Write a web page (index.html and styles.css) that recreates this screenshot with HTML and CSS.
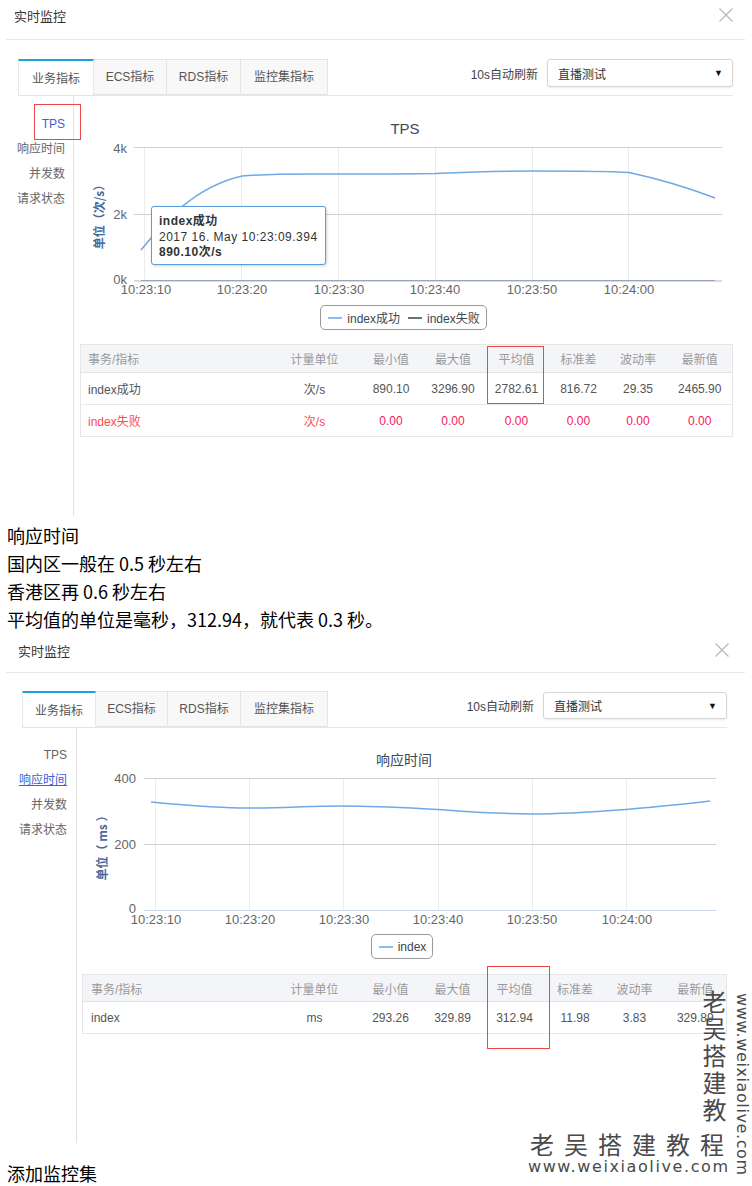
FILE: index.html
```html
<!DOCTYPE html>
<html lang="zh-CN">
<head>
<meta charset="utf-8">
<title>实时监控</title>
<link rel="stylesheet" href="styles.css">
</head>
<body>
<div class="page">

  <section class="panel panel-a">
    <header class="panel-head">
      <span class="panel-title">实时监控</span>
      <svg class="close" width="14" height="14" viewBox="0 0 14 14"><path d="M0.5 0.5 L13.5 13.5 M13.5 0.5 L0.5 13.5"/></svg>
    </header>
    <div class="toolbar">
      <ul class="tabs">
        <li class="tab active">业务指标</li>
        <li class="tab">ECS指标</li>
        <li class="tab">RDS指标</li>
        <li class="tab">监控集指标</li>
      </ul>
      <div class="refresh">
        <span class="refresh-label">10s自动刷新</span>
        <div class="select"><span>直播测试</span><span class="caret">▼</span></div>
      </div>
    </div>
    <div class="body">
      <nav class="side">
        <a class="side-item current">TPS</a>
        <a class="side-item">响应时间</a>
        <a class="side-item">并发数</a>
        <a class="side-item">请求状态</a>
      </nav>
      <div class="main">
        <div class="chart">
          <svg class="plot" width="658" height="209" viewBox="75 96 658 209">
            <text class="ctitle" x="406" y="134">TPS</text>
            <g class="vgrid">
              <line x1="145.5" y1="147" x2="145.5" y2="281"/>
              <line x1="242.5" y1="147" x2="242.5" y2="281"/>
              <line x1="339.5" y1="147" x2="339.5" y2="281"/>
              <line x1="436.5" y1="147" x2="436.5" y2="281"/>
              <line x1="533.5" y1="147" x2="533.5" y2="281"/>
              <line x1="629.5" y1="147" x2="629.5" y2="281"/>
            </g>
            <g class="hgrid">
              <line x1="135" y1="147.5" x2="723" y2="147.5"/>
              <line x1="135" y1="214.5" x2="723" y2="214.5"/>
            </g>
            <line class="axis" x1="135" y1="281" x2="723" y2="281"/>
            <path class="series2" d="M142 280.5 L716 280.5"/>
            <path class="series" d="M142 250 C165 222 195 187 243 176 C280 173 310 174 340 174 C380 174 400 174 436 173.5 C470 172 500 171 533 171 C570 171 605 171 630 172.5 C665 180 690 188 716 198"/>
            <text class="ylab" x="128" y="152.5">4k</text>
            <text class="ylab" x="128" y="219">2k</text>
            <text class="ylab" x="128" y="284">0k</text>
            <text class="xlab" x="147" y="294">10:23:10</text>
            <text class="xlab" x="243" y="294">10:23:20</text>
            <text class="xlab" x="340" y="294">10:23:30</text>
            <text class="xlab" x="436" y="294">10:23:40</text>
            <text class="xlab" x="533" y="294">10:23:50</text>
            <text class="xlab" x="630" y="294">10:24:00</text>
            <text class="ytitle" transform="translate(105 214) rotate(-90)">单位（次/s）</text>
          </svg>
          <div class="tooltip">
            <div class="tip-name">index成功</div>
            <div class="tip-time">2017 16. May 10:23:09.394</div>
            <div class="tip-value">890.10次/s</div>
          </div>
        </div>
        <div class="legend-row">
          <div class="legend">
            <span class="legend-item"><i class="swatch blue"></i>index成功</span>
            <span class="legend-item"><i class="swatch gray"></i>index失败</span>
          </div>
        </div>
        <table class="stats">
          <colgroup>
            <col class="ca1"><col class="ca2"><col class="ca3"><col class="ca4"><col class="ca5"><col class="ca6"><col class="ca7"><col class="ca8">
          </colgroup>
          <thead>
            <tr><th class="name">事务/指标</th><th>计量单位</th><th>最小值</th><th>最大值</th><th>平均值</th><th>标准差</th><th>波动率</th><th>最新值</th></tr>
          </thead>
          <tbody>
            <tr><td class="name">index成功</td><td>次/s</td><td>890.10</td><td>3296.90</td><td>2782.61</td><td>816.72</td><td>29.35</td><td>2465.90</td></tr>
            <tr class="fail"><td class="name">index失败</td><td>次/s</td><td class="num">0.00</td><td class="num">0.00</td><td class="num">0.00</td><td class="num">0.00</td><td class="num">0.00</td><td class="num">0.00</td></tr>
          </tbody>
        </table>
      </div>
    </div>
    <span class="mark mark-tps"></span>
    <span class="mark mark-avg-a"></span>
  </section>

  <div class="article">
    <p>响应时间</p>
    <p>国内区一般在 0.5 秒左右</p>
    <p>香港区再 0.6 秒左右</p>
    <p>平均值的单位是毫秒，312.94，就代表 0.3 秒。</p>
  </div>

  <section class="panel panel-b">
    <header class="panel-head">
      <span class="panel-title">实时监控</span>
      <svg class="close" width="14" height="14" viewBox="0 0 14 14"><path d="M0.5 0.5 L13.5 13.5 M13.5 0.5 L0.5 13.5"/></svg>
    </header>
    <div class="toolbar">
      <ul class="tabs">
        <li class="tab active">业务指标</li>
        <li class="tab">ECS指标</li>
        <li class="tab">RDS指标</li>
        <li class="tab">监控集指标</li>
      </ul>
      <div class="refresh">
        <span class="refresh-label">10s自动刷新</span>
        <div class="select"><span>直播测试</span><span class="caret">▼</span></div>
      </div>
    </div>
    <div class="body">
      <nav class="side">
        <a class="side-item">TPS</a>
        <a class="side-item current link">响应时间</a>
        <a class="side-item">并发数</a>
        <a class="side-item">请求状态</a>
      </nav>
      <div class="main">
        <div class="chart">
          <svg class="plot" width="649" height="206" viewBox="78 728 649 206">
            <text class="ctitle cjk" x="405" y="765">响应时间</text>
            <g class="vgrid">
              <line x1="156.5" y1="778" x2="156.5" y2="910"/>
              <line x1="250.5" y1="778" x2="250.5" y2="910"/>
              <line x1="344.5" y1="778" x2="344.5" y2="910"/>
              <line x1="439.5" y1="778" x2="439.5" y2="910"/>
              <line x1="533.5" y1="778" x2="533.5" y2="910"/>
              <line x1="627.5" y1="778" x2="627.5" y2="910"/>
            </g>
            <g class="hgrid">
              <line x1="145" y1="778.5" x2="717" y2="778.5"/>
              <line x1="145" y1="844.5" x2="717" y2="844.5"/>
            </g>
            <line class="axis light" x1="145" y1="910.5" x2="717" y2="910.5"/>
            <path class="series" d="M152 802 C185 805 215 808 250 808 C285 808 310 806 344 806 C380 806 410 808 439 809.5 C475 812 500 814 533 814 C565 814 600 811.5 627 809.5 C660 806.5 690 803.5 711 801"/>
            <text class="ylab" x="137" y="783">400</text>
            <text class="ylab" x="137" y="848.5">200</text>
            <text class="ylab" x="137" y="912.5">0</text>
            <text class="xlab" x="157" y="923.5">10:23:10</text>
            <text class="xlab" x="251" y="923.5">10:23:20</text>
            <text class="xlab" x="345" y="923.5">10:23:30</text>
            <text class="xlab" x="439" y="923.5">10:23:40</text>
            <text class="xlab" x="533" y="923.5">10:23:50</text>
            <text class="xlab" x="628" y="923.5">10:24:00</text>
            <text class="ytitle" transform="translate(108 845) rotate(-90)">单位（ ms ）</text>
          </svg>
        </div>
        <div class="legend-row">
          <div class="legend">
            <span class="legend-item"><i class="swatch blue"></i>index</span>
          </div>
        </div>
        <table class="stats">
          <colgroup>
            <col class="cb1"><col class="cb2"><col class="cb3"><col class="cb4"><col class="cb5"><col class="cb6"><col class="cb7"><col class="cb8">
          </colgroup>
          <thead>
            <tr><th class="name">事务/指标</th><th>计量单位</th><th>最小值</th><th>最大值</th><th>平均值</th><th>标准差</th><th>波动率</th><th>最新值</th></tr>
          </thead>
          <tbody>
            <tr><td class="name">index</td><td>ms</td><td>293.26</td><td>329.89</td><td>312.94</td><td>11.98</td><td>3.83</td><td>329.89</td></tr>
          </tbody>
        </table>
      </div>
    </div>
    <span class="mark mark-avg-b"></span>
  </section>

  <p class="closing">添加监控集</p>

  <div class="watermark" aria-hidden="true">
    <span class="wm-col">老吴搭建教</span>
    <span class="wm-row">老吴搭建教程</span>
    <span class="wm-url">www.weixiaolive.com</span>
    <span class="wm-url-v">www.weixiaolive.com</span>
  </div>
</div>
</body>
</html>
```

FILE: styles.css
```css
html, body {
  margin: 0;
  padding: 0;
  background: #fff;
}

body {
  font-family: "Liberation Sans", "Noto Sans CJK SC", sans-serif;
  font-size: 12px;
  color: #555;
}

.page {
  position: relative;
  width: 752px;
  height: 1186px;
  overflow: hidden;
}

/* ---------- panel ---------- */
.panel {
  position: relative;
}

.panel-head {
  display: flex;
  justify-content: space-between;
  align-items: flex-start;
  box-sizing: border-box;
  margin: 0 7px 0 6px;
  border-bottom: 1px solid #e8e8e8;
}

.panel-a .panel-head {
  height: 40px;
  padding: 8px 12px 0 8px;
}

.panel-b .panel-head {
  height: 40px;
  padding: 10px 16px 0 12px;
}

.panel-title {
  font-size: 13px;
  line-height: 17px;
  color: #333;
}

.close path {
  stroke: #b8b8b8;
  stroke-width: 1.3;
  fill: none;
}

/* ---------- toolbar / tabs ---------- */
.toolbar {
  display: flex;
  justify-content: space-between;
  align-items: flex-start;
  height: 36px;
  border-bottom: 1px solid #e6e6e6;
}

.panel-a .toolbar {
  margin: 19px 19px 0 18px;
}

.panel-b .toolbar {
  margin: 18px 25px 0 22px;
}

.tabs {
  display: flex;
  margin: 0;
  padding: 0;
  list-style: none;
}

.tab {
  box-sizing: border-box;
  height: 36px;
  line-height: 35px;
  text-align: center;
  font-size: 12px;
  color: #555;
  background: #f8f8f8;
  border: 1px solid #e4e4e4;
  border-left: none;
}

.tab.active {
  height: 37px;
  background: #fff;
  border-top: 2px solid #1fa0d8;
  border-left: 1px solid #e8e8e8;
  border-right: 1px solid #e8e8e8;
  line-height: 36px;
}

.panel-a .tab:nth-child(1) { width: 76px; }
.panel-a .tab:nth-child(2) { width: 73px; }
.panel-a .tab:nth-child(3) { width: 74px; }
.panel-a .tab:nth-child(4) { width: 87px; }

.panel-b .tab:nth-child(1) { width: 74px; }
.panel-b .tab:nth-child(2) { width: 72px; }
.panel-b .tab:nth-child(3) { width: 73px; }
.panel-b .tab:nth-child(4) { width: 87px; }

.refresh {
  display: flex;
  align-items: center;
}

.refresh-label {
  font-size: 12px;
  color: #444;
  margin-right: 9px;
}

.select {
  display: flex;
  justify-content: space-between;
  align-items: center;
  box-sizing: border-box;
  padding: 0 9px 0 10px;
  border: 1px solid #d6d6d6;
  border-radius: 3px;
  box-shadow: 0 1px 2px rgba(0, 0, 0, 0.08);
  font-size: 12px;
  color: #333;
  background: #fff;
}

.panel-a .select {
  width: 186px;
  height: 28px;
}

.panel-b .select {
  width: 184px;
  height: 27px;
  margin-top: 1px;
}

.caret {
  font-size: 9px;
  color: #111;
}

/* ---------- body ---------- */
.body {
  display: flex;
}

.panel-a .body {
  height: 420px;
  margin-left: 18px;
  margin-right: 19px;
}

.panel-b .body {
  height: 415px;
  margin-left: 22px;
  margin-right: 25px;
}

.side {
  display: flex;
  flex-direction: column;
  align-items: flex-end;
  box-sizing: border-box;
  border-right: 1px solid #e2e2e2;
}

.panel-a .side {
  width: 56px;
  padding: 16px 8px 0 0;
}

.panel-b .side {
  width: 55px;
  padding: 15px 9px 0 0;
}

.side-item {
  font-size: 12px;
  line-height: 25px;
  color: #666;
  white-space: nowrap;
}

.side-item.current {
  color: #3e5fd8;
}

.side-item.link {
  text-decoration: underline;
}

.main {
  flex: 1;
  display: flex;
  flex-direction: column;
}

.chart {
  position: relative;
}

.plot {
  display: block;
}

.ctitle {
  font-family: "Liberation Sans", "Noto Sans CJK SC", sans-serif;
  font-size: 15px;
  fill: #3d4a58;
  text-anchor: middle;
}

.ctitle.cjk {
  font-size: 14px;
}

.vgrid line {
  stroke: #ececec;
  stroke-width: 1;
}

.hgrid line {
  stroke: #d0d0d0;
  stroke-width: 1;
}

.axis {
  stroke: #c3cfe0;
  stroke-width: 1.5;
}

.axis.light {
  stroke: #ccd6eb;
  stroke-width: 1;
}

.series {
  fill: none;
  stroke: #6fa8e6;
  stroke-width: 1.5;
}

.series2 {
  fill: none;
  stroke: #9aa6b6;
  stroke-width: 1;
}

.ylab {
  font-family: "Liberation Sans", sans-serif;
  font-size: 13px;
  fill: #666;
  text-anchor: end;
}

.xlab {
  font-family: "Liberation Sans", sans-serif;
  font-size: 13px;
  fill: #666;
  text-anchor: middle;
}

.ytitle {
  font-family: "Noto Sans CJK SC", "Liberation Sans", sans-serif;
  font-size: 12px;
  font-weight: bold;
  fill: #46689a;
  text-anchor: middle;
}

.tooltip {
  position: absolute;
  left: 77px;
  top: 110px;
  width: 175px;
  height: 59px;
  box-sizing: border-box;
  padding: 7px 0 0 7px;
  background: #fff;
  border: 1px solid #5b9be0;
  border-radius: 3px;
  box-shadow: 1px 1px 3px rgba(0, 0, 0, 0.18);
  font-size: 12px;
  line-height: 15.5px;
  letter-spacing: 0.5px;
  color: #333;
}

.tip-name,
.tip-value {
  font-weight: bold;
}

/* ---------- legend ---------- */
.legend-row {
  display: flex;
  justify-content: center;
}

.legend {
  display: inline-flex;
  align-items: center;
  gap: 8px;
  height: 25px;
  box-sizing: border-box;
  padding: 0 6px 0 7px;
  border: 1px solid #9a9a9a;
  border-radius: 5px;
  font-size: 12px;
  color: #3a4654;
}

.legend-item {
  display: inline-flex;
  align-items: center;
}

.swatch {
  display: inline-block;
  width: 14px;
  height: 2px;
  margin-right: 5px;
}

.swatch.blue { background: #8dbdf0; }
.swatch.gray { background: #6a7078; }

/* ---------- table ---------- */
.stats {
  border-collapse: collapse;
  table-layout: fixed;
  font-size: 12px;
  border: 1px solid #e6e6e6;
}

.panel-a .stats {
  width: 652px;
  margin: 14px 0 0 6px;
}

.panel-b .stats {
  width: 644px;
  margin: 15px 0 0 5px;
}

.ca1 { width: 188px; } .ca2 { width: 92px; } .ca3 { width: 61px; } .ca4 { width: 63px; }
.ca5 { width: 64px; } .ca6 { width: 60px; } .ca7 { width: 59px; } .ca8 { width: 65px; }

.cb1 { width: 187px; } .cb2 { width: 90px; } .cb3 { width: 62px; } .cb4 { width: 62px; }
.cb5 { width: 62px; } .cb6 { width: 59px; } .cb7 { width: 60px; } .cb8 { width: 62px; }

.stats th {
  height: 27px;
  padding: 0;
  font-weight: normal;
  color: #999;
  background: #f4f5f9;
  border-bottom: 1px solid #e4e4e8;
  text-align: center;
}

.stats td {
  height: 31px;
  padding: 0;
  color: #555;
  text-align: center;
  border-bottom: 1px solid #e8e8e8;
}

.panel-b .stats th {
  height: 26px;
}

.stats .name {
  text-align: left;
  padding-left: 7px;
}

.panel-b .stats .name {
  padding-left: 8px;
}

.stats .fail td {
  color: #ff4a4a;
}

.stats .fail td.num {
  color: #f2215a;
}

/* ---------- annotation marks ---------- */
.mark {
  position: absolute;
  box-sizing: border-box;
  border: 1px solid #e94848;
}

.mark-tps {
  left: 34px;
  top: 104px;
  width: 47px;
  height: 36px;
}

.mark-avg-a {
  left: 487px;
  top: 346px;
  width: 57px;
  height: 58px;
}

.mark-avg-b {
  left: 487px;
  top: 333px;
  width: 63px;
  height: 83px;
}

/* ---------- article text ---------- */
.article {
  margin: 5px 0 0 7px;
}

.article p,
.closing {
  margin: 0;
  font-family: "Noto Sans CJK SC", sans-serif;
  font-size: 18px;
  line-height: 28px;
  color: #000;
}

.closing {
  margin: 16px 0 0 7px;
}

/* ---------- watermark ---------- */
.watermark {
  position: absolute;
  left: 0;
  top: 0;
  width: 752px;
  height: 1186px;
  pointer-events: none;
  color: #4a4a4a;
}

.wm-col,
.wm-row,
.wm-url,
.wm-url-v {
  position: absolute;
  white-space: nowrap;
}

.wm-col {
  left: 702px;
  top: 990px;
  writing-mode: vertical-rl;
  font-family: "Noto Sans CJK SC", sans-serif;
  font-size: 24px;
  line-height: 24px;
  letter-spacing: 3px;
}

.wm-row {
  left: 530px;
  top: 1131px;
  font-family: "Noto Sans CJK SC", sans-serif;
  font-size: 24px;
  line-height: 26px;
  letter-spacing: 10px;
}

.wm-url {
  left: 528px;
  top: 1158px;
  font-family: "DejaVu Sans", sans-serif;
  font-size: 16px;
  line-height: 18px;
  letter-spacing: 1.6px;
}

.wm-url-v {
  left: 734px;
  top: 993px;
  writing-mode: vertical-rl;
  font-family: "DejaVu Sans", sans-serif;
  font-size: 16px;
  line-height: 16px;
  letter-spacing: 0.6px;
}
```
